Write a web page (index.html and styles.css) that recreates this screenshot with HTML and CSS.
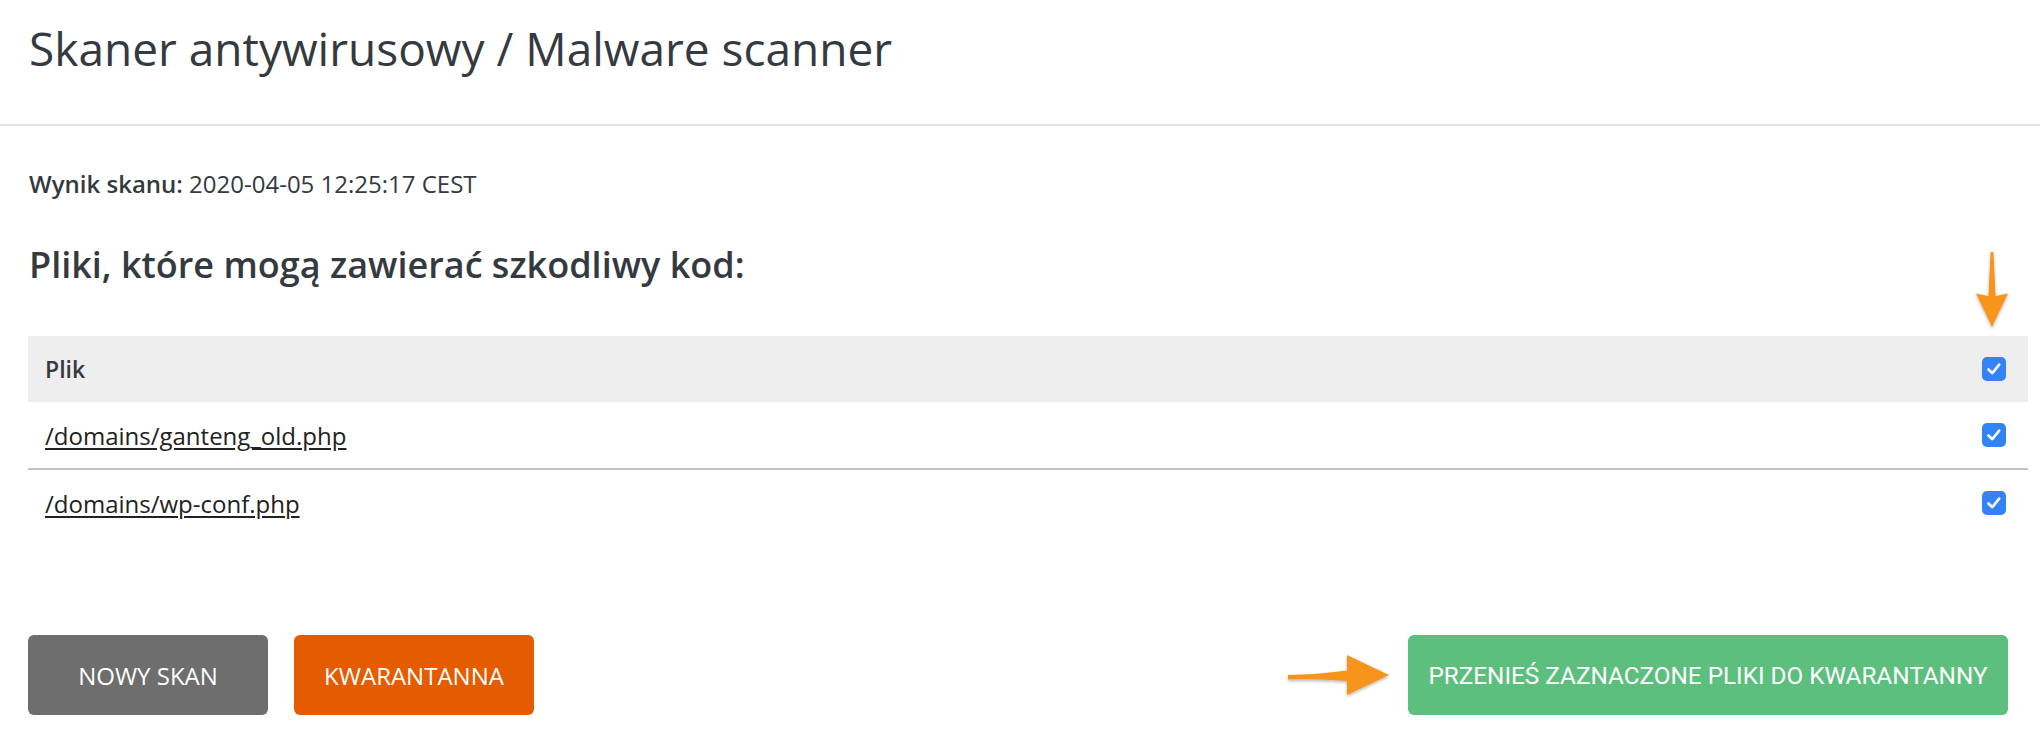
FILE: index.html
```html
<!DOCTYPE html>
<html lang="pl">
<head>
<meta charset="utf-8">
<title>Skaner antywirusowy / Malware scanner</title>
<link rel="stylesheet" href="styles.css">
</head>
<body>
<header class="page-header">
  <h1 class="page-title">Skaner antywirusowy / Malware scanner</h1>
</header>
<main class="content">
  <p class="scan-result"><strong>Wynik skanu:</strong> 2020-04-05 12:25:17 CEST</p>
  <h2 class="section-title">Pliki, które mogą zawierać szkodliwy kod:</h2>
  <div class="table-wrap">
    <svg class="arrow-down" width="36" height="80" viewBox="0 0 36 80">
      <defs>
        <filter id="sh1" x="-30%" y="-10%" width="160%" height="130%">
          <feDropShadow dx="0" dy="1.5" stdDeviation="1.5" flood-color="#000" flood-opacity="0.3"/>
        </filter>
      </defs>
      <path d="M16.6 1 L19.4 1 L21.6 45 L34 42.5 L18 76 L2 42.5 L14.4 45 Z" fill="#f7941d" filter="url(#sh1)"/>
    </svg>
    <div class="table">
      <div class="row row-head">
        <span class="cell-name">Plik</span>
        <span class="check"><svg width="24" height="24" viewBox="0 0 24 24"><path d="M6.5 12.5 L10.2 16.2 L17.2 7.6" fill="none" stroke="#fff" stroke-width="2.6" stroke-linecap="round" stroke-linejoin="round"/></svg></span>
      </div>
      <div class="row row-sep">
        <a class="cell-name file-link" href="#">/domains/ganteng_old.php</a>
        <span class="check"><svg width="24" height="24" viewBox="0 0 24 24"><path d="M6.5 12.5 L10.2 16.2 L17.2 7.6" fill="none" stroke="#fff" stroke-width="2.6" stroke-linecap="round" stroke-linejoin="round"/></svg></span>
      </div>
      <div class="row">
        <a class="cell-name file-link" href="#">/domains/wp-conf.php</a>
        <span class="check"><svg width="24" height="24" viewBox="0 0 24 24"><path d="M6.5 12.5 L10.2 16.2 L17.2 7.6" fill="none" stroke="#fff" stroke-width="2.6" stroke-linecap="round" stroke-linejoin="round"/></svg></span>
      </div>
    </div>
  </div>
  <div class="actions">
    <div class="actions-left">
      <button class="btn btn-gray">NOWY SKAN</button>
      <button class="btn btn-orange">KWARANTANNA</button>
    </div>
    <div class="actions-right">
      <svg class="arrow-right" width="106" height="44" viewBox="0 0 106 44">
        <defs>
          <filter id="sh2" x="-10%" y="-30%" width="130%" height="160%">
            <feDropShadow dx="0" dy="1.5" stdDeviation="1.5" flood-color="#000" flood-opacity="0.3"/>
          </filter>
        </defs>
        <path d="M1 21 Q30 20.5 60 16.5 L60 1 L102 21 L60 41 L60 27 Q30 24.5 1 25.5 Z" fill="#f7941d" filter="url(#sh2)"/>
      </svg>
      <button class="btn btn-green">PRZENIEŚ ZAZNACZONE PLIKI DO KWARANTANNY</button>
    </div>
  </div>
</main>
</body>
</html>
```

FILE: styles.css
```css
html, body {
  margin: 0;
  padding: 0;
  background: #ffffff;
}

body {
  font-family: "Open Sans", "Liberation Sans", sans-serif;
  color: #343a40;
}

.page-header {
  padding: 20px 28px 47px 29px;
  border-bottom: 2px solid #e2e2e2;
}

.page-title {
  margin: 0;
  font-size: 46px;
  font-weight: 400;
  line-height: 57px;
  color: #343a40;
}

.content {
  padding: 43px 12px 0 28px;
}

.scan-result {
  margin: 0 0 0 1px;
  font-size: 24px;
  line-height: 29px;
  color: #343a40;
}

.scan-result strong {
  font-weight: 600;
}

.section-title {
  margin: 44px 0 0 1px;
  font-size: 36px;
  font-weight: 600;
  line-height: 46px;
  color: #343a40;
}

.table-wrap {
  position: relative;
  margin-top: 48px;
}

.arrow-down {
  position: absolute;
  right: 18px;
  top: -85px;
}

.table {
  display: flex;
  flex-direction: column;
}

.row {
  display: flex;
  align-items: center;
  justify-content: space-between;
  height: 66px;
  padding: 0 22px 0 17px;
}

.row-head {
  background: #eeeeee;
}

.row-sep {
  border-bottom: 2px solid #c4c4c4;
}

.cell-name {
  font-size: 24px;
  color: #343a40;
}

.row-head .cell-name {
  font-size: 23px;
  font-weight: 600;
}

.file-link {
  color: #222222;
  text-decoration: underline;
  text-underline-offset: 3px;
}

.check {
  display: flex;
  width: 24px;
  height: 24px;
  border-radius: 5px;
  background: #3483f6;
}

.actions {
  display: flex;
  justify-content: space-between;
  align-items: center;
  margin-top: 99px;
  padding-right: 20px;
}

.actions-left {
  display: flex;
  gap: 26px;
}

.actions-right {
  position: relative;
  display: flex;
}

.arrow-right {
  position: absolute;
  left: -121px;
  top: 19px;
}

.btn {
  height: 80px;
  border: none;
  border-radius: 6px;
  color: #ffffff;
  font-family: "Open Sans", "Liberation Sans", sans-serif;
  font-size: 24px;
  font-weight: 400;
  padding: 0;
  cursor: pointer;
}

.btn-gray {
  width: 240px;
  background: #6d6e6d;
}

.btn-orange {
  width: 240px;
  background: #e55c00;
}

.btn-green {
  width: 600px;
  background: #5cbf7e;
  font-family: Roboto, "Liberation Sans", sans-serif;
  font-size: 24.3px;
}
```
